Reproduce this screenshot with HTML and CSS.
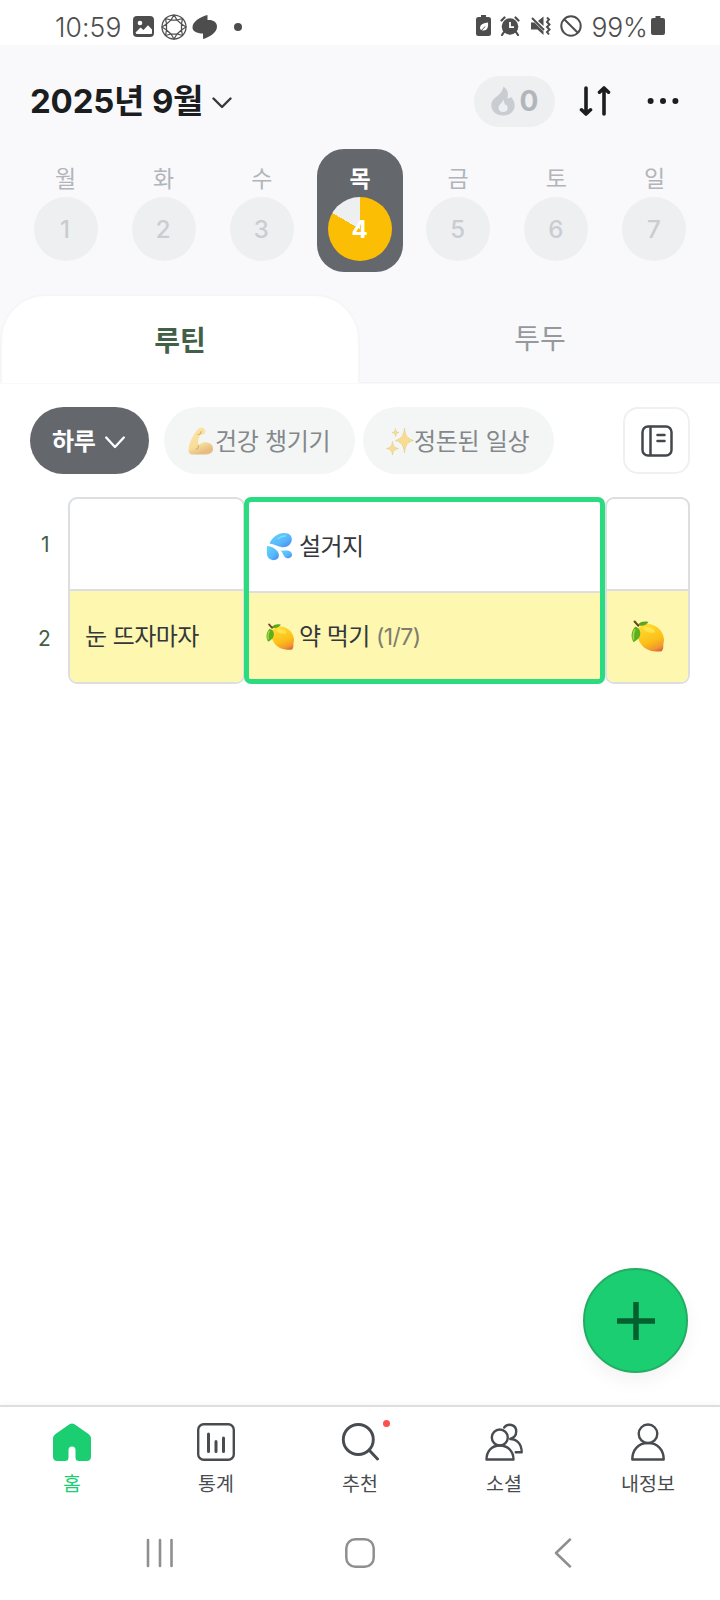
FILE: index.html
```
<!DOCTYPE html>
<html lang="ko">
<head>
<meta charset="utf-8">
<title>루틴</title>
<link rel="stylesheet" href="styles.css">
</head>
<body>
<svg class="defs" width="0" height="0" aria-hidden="true">
  <defs>
    <linearGradient id="lemonFill" x1="0.35" y1="0" x2="0.75" y2="1">
      <stop offset="0" stop-color="#ffdc30"/><stop offset="0.6" stop-color="#fcbf18"/><stop offset="0.88" stop-color="#f2962f"/><stop offset="1" stop-color="#d96a3c"/>
    </linearGradient>
    <linearGradient id="dropFill" x1="0" y1="0" x2="1" y2="1">
      <stop offset="0" stop-color="#5ed8fb"/><stop offset="0.6" stop-color="#58b6fb"/><stop offset="1" stop-color="#3f86ee"/>
    </linearGradient>
    <linearGradient id="armFill" x1="0" y1="0" x2="0.4" y2="1">
      <stop offset="0" stop-color="#fbe6a6"/><stop offset="0.7" stop-color="#f8dd9a"/><stop offset="1" stop-color="#e5bd83"/>
    </linearGradient>
    <symbol id="lemon" viewBox="0 0 32 32">
      <path d="M6.500 9C9 4.500 16 2.500 22 5c6 2.500 10 8.500 10 14.500 0 2-.7 3-.6 4.700.1 2.300-.4 4.800-1.600 6-1.500.8-3.300.3-5 .3C17.500 30.500 11.500 27 8.500 21.500 6 17 5 12.500 6.500 9z" fill="url(#lemonFill)"/>
      <ellipse cx="17.500" cy="9.500" rx="6" ry="2.400" transform="rotate(18 17.500 9.500)" fill="#fff06a" opacity=".55"/>
      <path d="M4 6.500c3 .5 5 3 5 6.500 0 3.500-2.500 6-6.500 8.500C-.5 17 0 11 4 6.500z" fill="#5fae20"/>
      <path d="M4 9c-2 3-2 6-1.500 10" fill="none" stroke="#a6df45" stroke-width="1.400"/>
      <path d="M6 5c3-3.500 7-4 11-3-2 3-6 4.500-11 3z" fill="#5ea51d"/>
      <path d="M3.500 1.500l3.500 4" stroke="#6c4322" stroke-width="2" stroke-linecap="round"/>
    </symbol>
  </defs>
</svg>

<div class="statusbar">
  <span class="clock">10:59</span>
  <svg class="st-photo" width="21" height="21" viewBox="0 0 21 21"><rect width="21" height="21" rx="4" fill="#4d4d4d"/><circle cx="7" cy="7" r="2.300" fill="#fff"/><path d="M2.500 16.500l5-5 3 2.600 4.500-4.800 4 4.300v3.400q0 1-1 1h-14.500z" fill="#fff"/></svg>
  <svg class="st-gem" width="26" height="26" viewBox="0 0 26 26" fill="none" stroke="#505050" stroke-width="1.250"><circle cx="13" cy="13" r="12"/><path d="M10 6h6l4.500 4v6L16 20h-6l-4.500-4v-6zM10 6l3-5 3 5 5.500-1.500-1 5.500 4.500 3-4.500 3 1 5.500L16 20l-3 5-3-5-5.500 1.500 1-5.500L1 13l4.500-3-1-5.500z"/></svg>
  <svg class="st-leaf" width="26" height="26" viewBox="0 0 26 26"><path d="M15.500 1v5c5.500-.5 9.500 2 9.500 6.500 0 6-7 10.500-14 12.500v-5.500C4.500 19.500.5 17 .5 13.500.5 7.500 8 3 15.500 1z" fill="#4d4d4d"/></svg>
  <span class="st-dot"></span>
  <div class="st-right">
    <svg width="15" height="21" viewBox="0 0 15 21"><path d="M5 0h5v2h2.500Q15 2 15 4.500v14q0 2.500-2.500 2.500h-10Q0 21 0 18.500v-14Q0 2 2.500 2H5z" fill="#4d4d4d"/><path d="M12 7.500c.5 5-1 8-4.500 8-1.500 0-3.500-.5-3.500-2.500 0-4 4-5 8-5.500z" fill="#fff"/><path d="M2 17.500c2-1 5-3 7-6" stroke="#4d4d4d" fill="none"/></svg>
    <svg width="20" height="20" viewBox="0 0 20 20"><circle cx="10" cy="10.500" r="8.300" fill="#4d4d4d"/><path d="M1.500 4.500l3-3M18.500 4.500l-3-3M4 16l-2 3M16 16l2 3" stroke="#4d4d4d" stroke-width="2.200" stroke-linecap="round"/><path d="M10 6v5.200h4" stroke="#fff" stroke-width="1.800" fill="none"/></svg>
    <svg width="21" height="20" viewBox="0 0 21 20"><path d="M1 6.500h3.500l9 9V19l-6-5.500H1zM8 5l5.500-4.500V10z" fill="#4d4d4d"/><path d="M2 2l12 12" stroke="#4d4d4d" stroke-width="2"/><path d="M17 1.500l2 2-2 2.500 2.500 2.500-2.500 2.500 2.500 2.500-2.500 2.500 2 2.500" fill="none" stroke="#4d4d4d" stroke-width="2"/></svg>
    <svg width="22" height="22" viewBox="0 0 22 22" fill="none" stroke="#4d4d4d" stroke-width="2"><circle cx="11" cy="11" r="9.700"/><path d="M4.200 4.200l13.600 13.600"/></svg>
    <span class="percent">99%</span>
    <svg class="st-batt" width="14" height="19" viewBox="0 0 14 19"><path d="M4.500 0h5v2H12q2 0 2 2v13q0 2-2 2H2q-2 0-2-2V4q0-2 2-2h2.500z" fill="#4d4d4d"/></svg>
  </div>
</div>

<header class="top">
  <div class="titlebar">
    <h1 class="month">2025년 9월</h1>
    <svg class="month-chev" width="20" height="12" viewBox="0 0 20 12"><path d="M1.500 1.500L10 10l8.500-8.500" fill="none" stroke="#36393d" stroke-width="2.400" stroke-linecap="round" stroke-linejoin="round"/></svg>
    <div class="streak">
      <svg width="24" height="30" viewBox="0 0 24 30"><path fill-rule="evenodd" d="M12.500.6c2.500 1.500 4.700 5 4.500 8.200 0 1.500-.8 2.700-.4 3.400.6.800 2-.5 3.800-1.200.8 1.700 3.300 4 3.300 8.200 0 6-4.700 10.300-11.700 10.300S.3 25 .3 19C.300 13.500 5 11.500 8.500 8 11 5.500 12 3 12.500.6zM12 13.500c.6 2.500-4.500 5-4.500 8.200 0 2.800 2 4.300 4.600 4.300s4.600-1.500 4.600-4.100c0-1.700-1-2.700-1.700-3.400-.6.500-1 .5-1.200.1-.5-1.500-.3-3.600-1.800-5.100z" fill="#c9cdd2"/></svg>
      <span class="streak-num">0</span>
    </div>
    <svg class="sort" width="32" height="32" viewBox="0 0 32 32" fill="none" stroke="#1b1d1f" stroke-width="3.600" stroke-linecap="round" stroke-linejoin="round"><path d="M7 3v26M2.500 24.800L7 29l4.500-4.200M25 29V3M20.500 7.200L25 3l4.500 4.200"/></svg>
    <svg class="more" width="32" height="8" viewBox="0 0 32 8" fill="#1b1d1f"><circle cx="3.600" cy="4" r="3"/><circle cx="16" cy="4" r="3"/><circle cx="28.400" cy="4" r="3"/></svg>
  </div>

  <div class="week">
    <div class="day"><span class="dow">월</span><span class="num">1</span></div>
    <div class="day"><span class="dow">화</span><span class="num">2</span></div>
    <div class="day"><span class="dow">수</span><span class="num">3</span></div>
    <div class="day today"><span class="dow">목</span><span class="num">4</span></div>
    <div class="day"><span class="dow">금</span><span class="num">5</span></div>
    <div class="day"><span class="dow">토</span><span class="num">6</span></div>
    <div class="day"><span class="dow">일</span><span class="num">7</span></div>
  </div>

  <div class="tabs">
    <div class="tab on">루틴</div>
    <div class="tab">투두</div>
  </div>
</header>

<main class="content">
  <div class="filters">
    <div class="chip dark"><span>하루</span><svg width="20" height="13" viewBox="0 0 20 13"><path d="M1.200 1.500L10 11l8.800-9.500" fill="none" stroke="#fff" stroke-width="2.300" stroke-linecap="round" stroke-linejoin="round"/></svg></div>
    <div class="chip">
      <svg class="emo" width="26" height="28" viewBox="0 0 26 28"><path d="M9.500 2.500C11 .5 15 0 16.500 2c1.300 1.800 1 4-.5 5-1.300.8-3 .4-4 1.500-1.800 2.500-2.200 6-1.500 9.800 2-2.500 5.500-3.600 9-2.800 3.800.8 5.500 3.300 5.500 6.500 0 4-3.500 5.500-8.500 5.500H5c-3.500 0-4.700-1.500-4.500-5C.8 16.500 5 8 9.500 2.500z" fill="url(#armFill)"/><path d="M10 7.500c1.800 0 3-1 3.200-3M10.500 18.300c.3 1.700-.5 3-2 4" fill="none" stroke="#d6ae6b" stroke-width="1.100" stroke-linecap="round"/></svg>
      <span>건강 챙기기</span>
    </div>
    <div class="chip sparkle">
      <svg class="emo" width="28" height="28" viewBox="0 0 28 28" fill="#f8dc92" stroke="#e3c480" stroke-width=".5"><path d="M18.500 1c1 7.500 2 10 9 12.500-7 2-8 5-9 12.500-1-7.500-2.500-10.500-9-12.500 6.500-2.500 8-5 9-12.500zM6.500 14.500c.8 4.500 1.500 6 6 7-4.500 1.300-5.200 2.500-6 6.500-.8-4-1.500-5.200-6-6.500 4.500-1 5.200-2.500 6-7zM9.500 1.500c.4 3 1 3.500 3.500 4-2.500.8-3.100 1.500-3.500 4-.4-2.500-1-3.200-3.500-4 2.500-.5 3.100-1 3.500-4z"/></svg>
      <span>정돈된 일상</span>
    </div>
    <div class="note-btn"><svg width="32" height="32" viewBox="0 0 32 32" fill="none" stroke="#43474c" stroke-width="2.500" stroke-linecap="round"><rect x="1.500" y="1.500" width="29" height="29" rx="5.500"/><path d="M9.500 2v28M16.500 10h7M16.500 16h7"/></svg></div>
  </div>

  <div class="board">
    <div class="rows"><span>1</span><span>2</span></div>
    <div class="col first"><div class="cell"></div><div class="cell yellow">눈 뜨자마자</div></div>
    <div class="col main">
      <div class="cell">
        <svg class="cell-emo" width="27" height="29" viewBox="0 0 27 29" fill="url(#dropFill)"><path d="M3.500 11.500C6 5.500 12 1 18 1c6 0 8.500 3.500 7.700 7.500-1 5-5.700 7.500-10.200 6.500-4.500-.8-7-3-12-3.500z"/><path d="M1 14c4 .5 8 2 10.500 5.300 2.500 3.700 1.500 7.300-1.800 8.500C5.800 29 2.500 27 1.200 23.500.300 20.500 1.200 17.500 1 14z"/><path d="M14.500 18.500c2.500.5 5-.6 8 .3 3.700 1.200 4.500 4.700 2.300 6.500-2.400 1.700-5.300.8-6.800-1.400-1.200-1.900-1.700-3.900-3.500-5.400z"/><path d="M12 7c2-2 5-3.500 8-3" fill="none" stroke="#8ce8ff" stroke-width="1.500" opacity=".7"/></svg>
        <span>설거지</span>
      </div>
      <div class="cell yellow">
        <svg class="cell-emo" width="28" height="28"><use href="#lemon"/></svg>
        <span class="label">약 먹기 <small class="count">(1/7)</small></span>
      </div>
    </div>
    <div class="col last"><div class="cell"></div><div class="cell yellow"><svg width="33" height="33"><use href="#lemon"/></svg></div></div>
  </div>

  <div class="fab"><svg width="38" height="38" viewBox="0 0 38 38"><path d="M19 0v38M0 19h38" stroke="#04602f" stroke-width="5.500"/></svg></div>
</main>

<nav class="nav">
  <div class="item active">
    <svg width="38" height="38" viewBox="0 0 38 38"><path d="M16.500 1.300q2.500-1.600 5 0l14 9.700Q38 12.800 38 15v18.500Q38 38 33.500 38H26q-3.500 0-3.500-3.500V27a3.500 3.500 0 0 0-7 0v7.500Q15.500 38 12 38H4.500Q0 38 0 33.500V15q0-2.200 2.500-4z" fill="#1bce72"/></svg>
    <span>홈</span>
  </div>
  <div class="item">
    <svg width="38" height="38" viewBox="0 0 38 38" fill="none" stroke="#484c50" stroke-width="2.400" stroke-linecap="round"><rect x="1.200" y="1.200" width="35.600" height="35.600" rx="5.500"/><path stroke-width="3" d="M11.500 11v17.500M19 18.500v10M26.500 15v13.500"/></svg>
    <span>통계</span>
  </div>
  <div class="item badge">
    <svg width="38" height="38" viewBox="0 0 38 38" fill="none" stroke="#484c50" stroke-width="2.900" stroke-linecap="round"><circle cx="17.300" cy="16.500" r="15"/><path d="M28.500 27.500l8 8.500"/></svg>
    <span>추천</span>
  </div>
  <div class="item">
    <svg width="38" height="38" viewBox="0 0 38 38" fill="none" stroke="#484c50" stroke-width="2.400" stroke-linecap="round" stroke-linejoin="round"><circle cx="14.800" cy="14.500" r="8"/><path d="M1.500 36.500c0-8 5-14 13.300-14s13.700 6 13.700 14zM19.200 4.500c3.500-4.500 12-3.500 12 4 0 4-2.700 6.500-6 7.500 6.500 0 11.500 5 11.500 13.300h-6"/></svg>
    <span>소셜</span>
  </div>
  <div class="item">
    <svg width="38" height="38" viewBox="0 0 38 38" fill="none" stroke="#484c50" stroke-width="2.400" stroke-linejoin="round"><circle cx="19" cy="10.800" r="9.300"/><path d="M3.300 36.500c0-9 5.500-16.500 15.700-16.500s15.700 7.500 15.700 16.500z"/></svg>
    <span>내정보</span>
  </div>
</nav>

<div class="sysnav">
  <svg width="28" height="30" viewBox="0 0 28 30"><path d="M2 2v26M14 2v26M25.500 2v26" stroke="#8f8f8f" stroke-width="2.600" stroke-linecap="round"/></svg>
  <svg width="30" height="30" viewBox="0 0 30 30"><rect x="1.300" y="1.300" width="27.400" height="27.400" rx="9" fill="none" stroke="#8f8f8f" stroke-width="2.500"/></svg>
  <svg class="back" width="18" height="30" viewBox="0 0 18 30"><path d="M16 1.500L2 15l14 13.500" fill="none" stroke="#8f8f8f" stroke-width="2.500" stroke-linejoin="round" stroke-linecap="round"/></svg>
</div>
</body>
</html>
```
FILE: styles.css
```
* { box-sizing: border-box; }
body {
  margin: 0;
  width: 720px;
  height: 1600px;
  display: flex;
  flex-direction: column;
  overflow: hidden;
  background: #fff;
  color: #1b1d1f;
  font-family: Inter, "Noto Sans CJK KR", sans-serif;
}
svg { display: block; flex: none; }
.defs { position: absolute; }

.statusbar {
  height: 45px;
  flex: none;
  display: flex;
  align-items: center;
  padding: 8px 55px 0 55px;
  color: #4d4d4d;
  font: 300 26.5px/36px Inter, sans-serif;
}
.clock { width: 66px; letter-spacing: 0.1px; white-space: nowrap; }
.st-photo { margin-left: 12px; }
.st-gem { margin-left: 7px; }
.st-leaf { margin-left: 5px; }
.st-dot { width: 8px; height: 8px; margin-left: 16px; border-radius: 50%; background: #4d4d4d; }
.st-right { display: flex; align-items: center; gap: 9.5px; margin-left: auto; }
.st-right svg { position: relative; top: -1px; }
.percent { width: 56px; margin-right: -6px; letter-spacing: -0.2px; white-space: nowrap; }

.top { height: 339px; flex: none; background: #f9f9fb; }
.titlebar { height: 104px; display: flex; align-items: center; padding: 8px 41px 0 30px; }
.month { margin: 0; font-size: 33px; line-height: 48px; font-weight: 700; letter-spacing: -0.2px; white-space: nowrap; }
.month-chev { margin: 3px 0 0 9px; }
.streak {
  width: 81px;
  height: 51px;
  margin-left: auto;
  border-radius: 26px;
  background: #eeeff1;
  display: flex;
  align-items: center;
  justify-content: center;
  gap: 5px;
}
.streak-num { font-size: 28px; font-weight: 700; line-height: 40px; color: #b2b6bc; }
.sort { margin-left: 24px; }
.more { margin-left: 36px; }

.week { display: grid; grid-template-columns: repeat(7, 98.17px); justify-content: center; justify-items: center; }
.day { width: 86px; height: 123px; border-radius: 27px; display: flex; flex-direction: column; align-items: center; padding-top: 13px; }
.dow { height: 35px; line-height: 35px; font-size: 23px; color: #b1b5ba; }
.num {
  width: 64px;
  height: 64px;
  padding-right: 1px;
  border-radius: 50%;
  background: #eeeff1;
  color: #c9cdd2;
  text-align: center;
  font-size: 24px;
  line-height: 65px;
  font-weight: 500;
}
.today { background: #64676c; }
.today .dow { color: #fff; font-weight: 700; }
.today .num { color: #fff; font-weight: 700; background: conic-gradient(#fbbe05 0 300deg, #eeeff1 300deg); }

.tabs { height: 89px; margin-top: 22px; display: flex; }
.tab {
  flex: 1;
  border-bottom: 1px solid #f1f2f3;
  text-align: center;
  font-size: 28px;
  line-height: 90px;
  color: #95999e;
}
.tab.on {
  flex: none;
  width: 360px;
  border: 2px solid #f5f6f7;
  border-bottom: 0;
  border-radius: 46px 46px 0 0;
  background: #fff;
  color: #426045;
  font-weight: 700;
}

.content { flex: 1; position: relative; padding: 23px 30px 0; }
.filters { display: flex; align-items: center; height: 67px; }
.chip {
  width: 191px;
  height: 67px;
  border-radius: 34px;
  background: #f4f6f6;
  color: #85888a;
  font-size: 24px;
  letter-spacing: -0.3px;
  line-height: 36px;
  white-space: nowrap;
  display: flex;
  align-items: center;
  padding-left: 24px;
}
.chip span { padding-top: 2px; }
.chip .emo { margin-right: 1px; }
.chip.dark { width: 119px; margin-right: 15px; padding-left: 22px; gap: 9px; background: #64676c; color: #fff; font-weight: 700; }
.chip.dark svg { margin-top: 3px; }
.chip.sparkle { margin-left: 8px; padding-left: 23px; }
.chip.sparkle .emo { margin-right: 0; }
.note-btn { width: 67px; height: 67px; margin-left: auto; border: 2px solid #eff0f1; border-radius: 15px; display: flex; align-items: center; justify-content: center; }

.board { display: flex; height: 187px; margin-top: 23px; }
.rows { width: 38px; flex: none; display: grid; grid-template-rows: 94px 93px; color: #426045; font-size: 21px; line-height: 95px; }
.rows span { padding-left: 8px; }
.rows span:first-child { padding-left: 11px; }
.col { flex: none; display: grid; grid-template-rows: 90px 93px; border: 2px solid #dcdfe2; border-radius: 9px; overflow: hidden; }
.col.first { width: 177px; }
.col.main { width: 361px; margin-left: -1px; border: 5px solid #2bdb7f; border-radius: 7px; grid-template-rows: 89px 88px; }
.col.last { width: 85px; }
.cell { display: flex; align-items: center; font-size: 24px; letter-spacing: -0.55px; line-height: 36px; color: #34373b; white-space: pre; }
.cell + .cell { border-top: 2px solid #dcdfe2; }
.yellow { background: #fef7af; }
.first .cell { padding: 1px 0 0 15px; }
.main .cell { padding-left: 17px; }
.main .yellow { padding-top: 2px; }
.cell-emo { margin-right: 6px; }
.label { margin-left: -1px; }
.last .cell { justify-content: center; }
.count { font-size: 23px; letter-spacing: -0.6px; color: #7d7d70; }

.fab {
  position: absolute;
  right: 32px;
  bottom: 32px;
  width: 105px;
  height: 105px;
  border-radius: 50%;
  background: #1bce72;
  border: 2px solid #22ad63;
  box-shadow: 0 8px 18px rgba(0, 0, 0, 0.05);
  display: flex;
  align-items: center;
  justify-content: center;
}

.nav {
  height: 105px;
  flex: none;
  position: relative;
  border-top: 2px solid #dcdedf;
  box-shadow: 0 -3px 5px rgba(0, 0, 0, 0.025);
  background: #fff;
  display: grid;
  grid-template-columns: repeat(5, 1fr);
}
.item { display: flex; flex-direction: column; align-items: center; padding-top: 16px; font-size: 19.5px; line-height: 28px; color: #484c50; }
.item span { margin-top: 9px; }
.item.active { color: #1bce72; }
.badge { position: relative; }
.badge::after { content: ""; position: absolute; left: 95px; top: 13px; width: 7px; height: 7px; border-radius: 50%; background: #fb5050; }

.sysnav { height: 90px; flex: none; display: grid; grid-template-columns: 200px 200px 200px; justify-content: center; justify-items: center; padding-top: 28px; }
.back { margin-left: 5px; }
```
